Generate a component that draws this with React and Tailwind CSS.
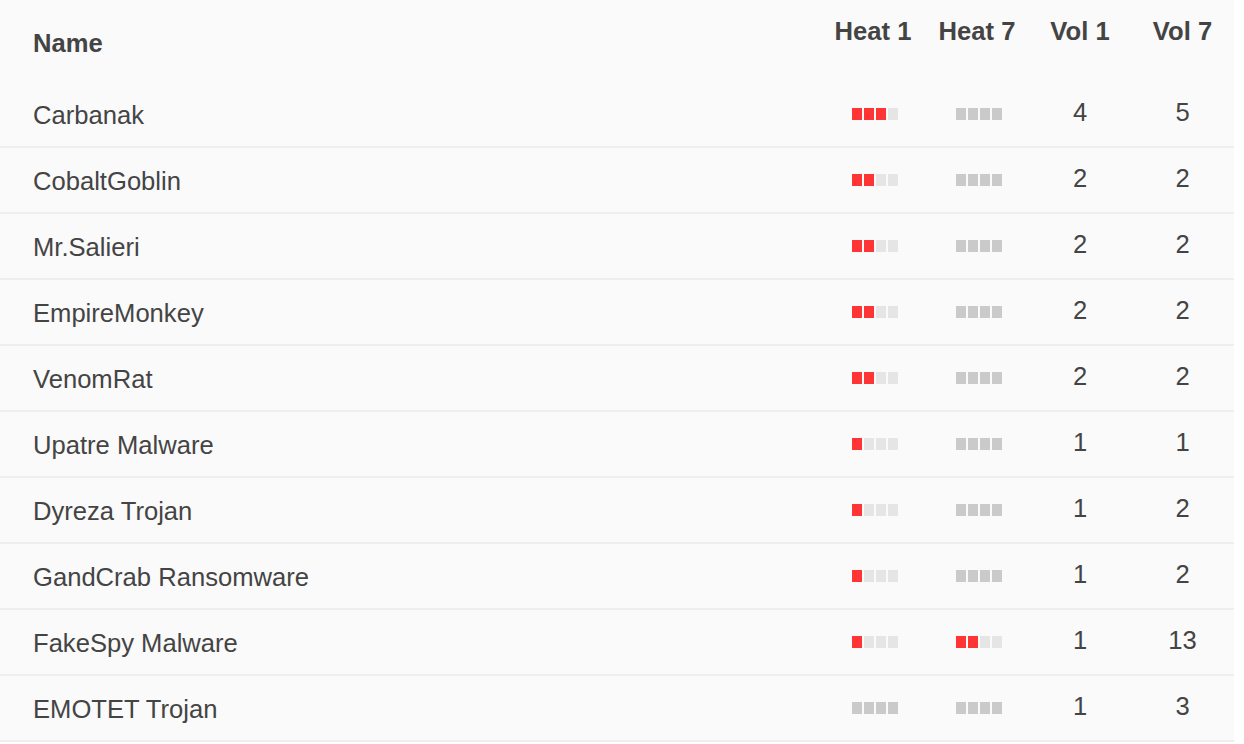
const rows = [
  { name: 'Carbanak', h1: 3, h7: 0, v1: 4, v7: 5 },
  { name: 'CobaltGoblin', h1: 2, h7: 0, v1: 2, v7: 2 },
  { name: 'Mr.Salieri', h1: 2, h7: 0, v1: 2, v7: 2 },
  { name: 'EmpireMonkey', h1: 2, h7: 0, v1: 2, v7: 2 },
  { name: 'VenomRat', h1: 2, h7: 0, v1: 2, v7: 2 },
  { name: 'Upatre Malware', h1: 1, h7: 0, v1: 1, v7: 1 },
  { name: 'Dyreza Trojan', h1: 1, h7: 0, v1: 1, v7: 2 },
  { name: 'GandCrab Ransomware', h1: 1, h7: 0, v1: 1, v7: 2 },
  { name: 'FakeSpy Malware', h1: 1, h7: 2, v1: 1, v7: 13 },
  { name: 'EMOTET Trojan', h1: 0, h7: 0, v1: 1, v7: 3 },
]

function Heat({ level }) {
  return (
    <div className="flex gap-[2px] pl-[4px]">
      {[0, 1, 2, 3].map((i) => (
        <span
          key={i}
          className={
            'block w-[10px] h-[12px] ' +
            (level === 0 ? 'bg-[#cacaca]' : i < level ? 'bg-[#ff3535]' : 'bg-[#e5e5e5]')
          }
        />
      ))}
    </div>
  )
}

export default function App() {
  return (
    <div className="w-[1234px] bg-[#fafafa] text-[#444444] font-['Liberation_Sans',Arial,sans-serif]">
      <div className="flex h-[82px] text-[25.6px] font-bold">
        <div className="flex-1 pl-[33px] pt-[28px] leading-[30px]">Name</div>
        <div className="w-[104px] text-center pt-[16px] leading-[30px]">Heat 1</div>
        <div className="w-[104px] text-center pt-[16px] leading-[30px]">Heat 7</div>
        <div className="w-[102px] text-center pt-[16px] leading-[30px]">Vol 1</div>
        <div className="w-[103px] text-center pt-[16px] leading-[30px]">Vol 7</div>
      </div>
      {rows.map((r) => (
        <div key={r.name} className="flex h-[66px] border-b-2 border-[#eeeeee] text-[25.6px]">
          <div className="flex-1 pl-[33px] pt-[18px] leading-[30px]">{r.name}</div>
          <div className="w-[104px] flex justify-center pt-[26px]">
            <Heat level={r.h1} />
          </div>
          <div className="w-[104px] flex justify-center pt-[26px]">
            <Heat level={r.h7} />
          </div>
          <div className="w-[102px] text-center pt-[15px] leading-[30px]">{r.v1}</div>
          <div className="w-[103px] text-center pt-[15px] leading-[30px]">{r.v7}</div>
        </div>
      ))}
    </div>
  )
}
